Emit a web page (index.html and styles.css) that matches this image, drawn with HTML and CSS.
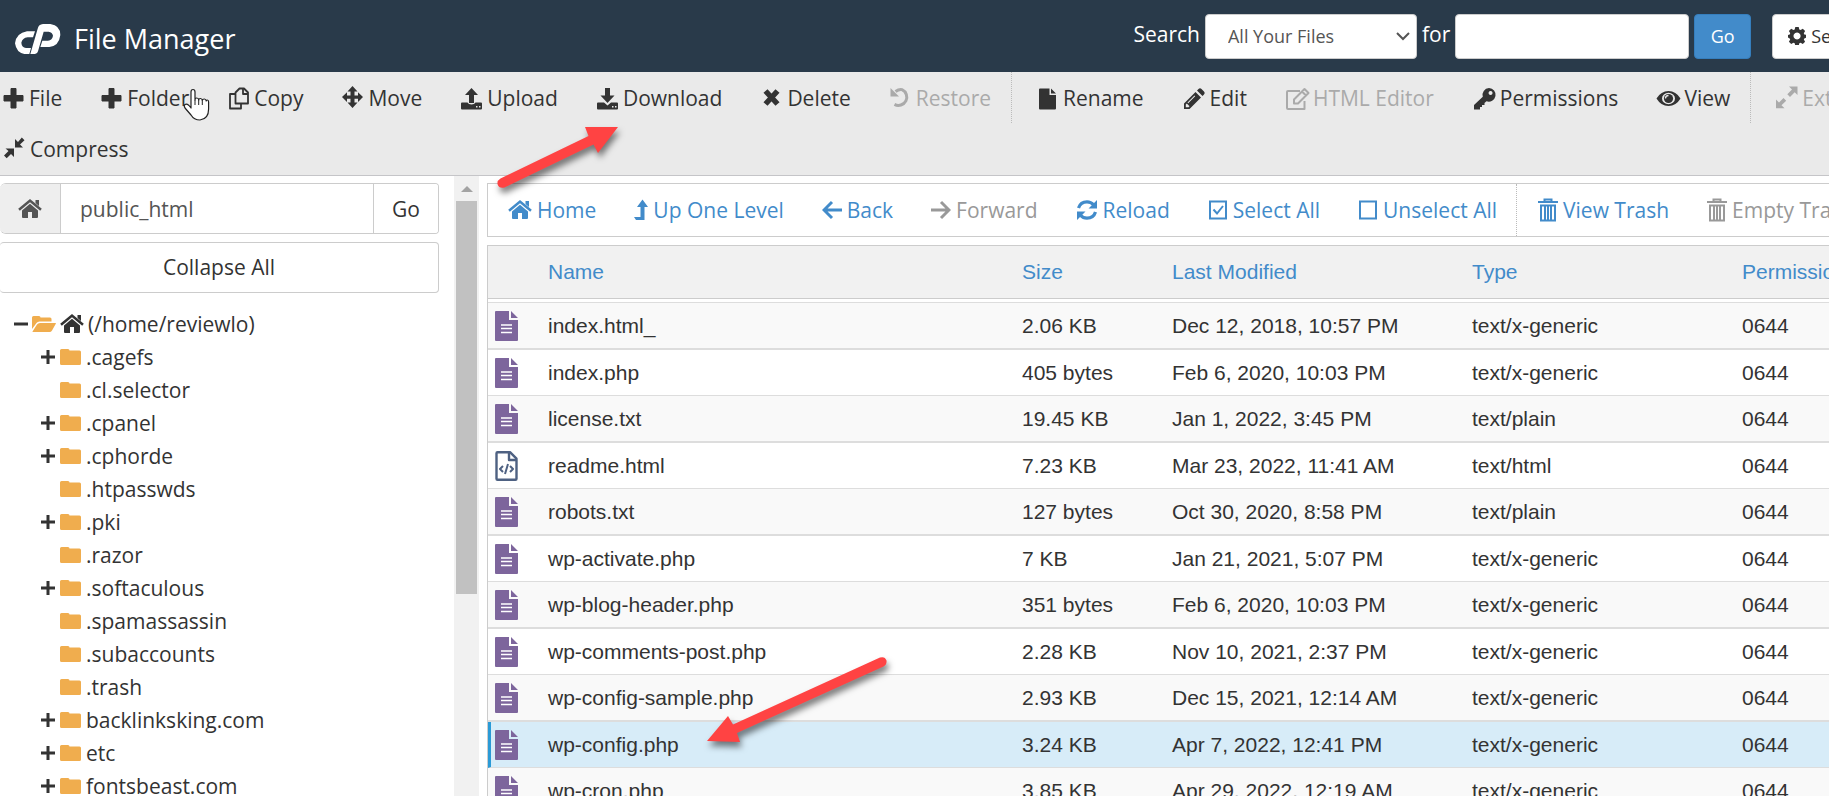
FILE: index.html
```html
<!DOCTYPE html>
<html lang="en">
<head>
    <meta charset="UTF-8">
    <meta name="viewport" content="width=device-width, initial-scale=1.0">
    <title>File Manager</title>
    <link rel="stylesheet" href="styles.css">
</head>
<body>
    <!-- icon sprite -->
    <svg class="sprite" aria-hidden="true">
        <symbol id="plus" viewBox="0 0 27 24"><path d="M11 2.500h5v7h7v5.500h-7v7h-5v-7h-7v-5.500h7z" stroke="currentColor" stroke-linejoin="round"/></symbol>
        <symbol id="copy" viewBox="0 0 27 24"><g fill="none" stroke="currentColor" stroke-width="1.800" stroke-linejoin="round"><path d="M10.500 6.500l4-4H19l4 4v11H10.500z"/><path d="M18 3v5h5"/><path d="M10.500 8H5v14.500h11V18"/></g></symbol>
        <symbol id="move" viewBox="0 0 27 24"><path d="M13.500 0l5 5.500h-3v4h3.500V6.200L24 11l-5 5v-3.300h-3.500v3.800h3L13.500 22l-5-5.500h3v-3.800H8V16l-5-5 5-4.800v3.300h3.500v-4h-3z"/></symbol>
        <symbol id="upload" viewBox="0 0 27 24"><path fill-rule="evenodd" d="M13.500 2l6.500 7h-4v8h-5V9H7zM4 16.500h5.500q1 2 4 2t4-2H23q1 0 1 1v5q0 1-1 1H4q-1 0-1-1v-5q0-1 1-1zM18 20v1.500h1.500V20zM21 20v1.500h1.500V20z"/></symbol>
        <symbol id="download" viewBox="0 0 27 24"><path fill-rule="evenodd" d="M11 2h5v7.500h4.500l-7 7.500-7-7.500H11zM4 16.500h6l3.500 3 3.500-3H23q1 0 1 1v5q0 1-1 1H4q-1 0-1-1v-5q0-1 1-1zM18 20v1.500h1.500V20zM21 20v1.500h1.500V20z"/></symbol>
        <symbol id="delete" viewBox="0 0 27 24"><path d="M7.500 5l12 13M19.500 5l-12 13" stroke="currentColor" stroke-width="5.500"/></symbol>
        <symbol id="restore" viewBox="0 0 27 24"><path d="M8.500 5.500Q12 3 15 3.600a8.300 8.300 0 1 1-7.500 14.800" fill="none" stroke="currentColor" stroke-width="3"/><path d="M3.500 2v8.500H12z"/></symbol>
        <symbol id="rename" viewBox="0 0 27 24"><path d="M6 2.500h9.500V9H22v13.500q0 1-1 1H6q-1 0-1-1v-19q0-1 1-1zM17 2.500l5 5h-5z"/></symbol>
        <symbol id="edit" viewBox="0 0 27 24"><path fill-rule="evenodd" d="M3 17.500L14.500 6l5.500 5.500L8.500 23H3zM4.800 18.500v2.700h2.700l1-1-2.700-2.700zM13.500 9.500l-7 7 .700.700 7-7zM16 4.500l1.500-1.500q1.500-1.500 3 0L23 5.500q1.500 1.500 0 3L21.500 10z"/></symbol>
        <symbol id="html-edit" viewBox="0 0 27 24"><g fill="none" stroke="currentColor" stroke-width="2" stroke-linejoin="round"><path d="M16 5H4q-1 0-1 1v16q0 1 1 1h16.500V15"/><path d="M10 13.500L20.500 3l4 4L14 17.500h-4zM18 5.500l4 4"/></g></symbol>
        <symbol id="key" viewBox="0 0 27 24"><path fill-rule="evenodd" d="M18 2a6.800 6.800 0 1 1-2.500 13.200L13.500 17v2h-2.500v2H9v2.500H3v-4.500l8.800-8.200A6.800 6.800 0 0 1 18 2zM19.500 5a2 2 0 1 0 .100 0z"/></symbol>
        <symbol id="eye" viewBox="0 0 27 24"><path fill-rule="evenodd" d="M1.500 12.500Q6 5 13.500 5t12 7.500Q21 20 13.500 20t-12-7.500zM7 12.500a6.500 5.800 0 1 0 13 0 6.500 5.800 0 1 0-13 0z"/><circle cx="13.500" cy="12.500" r="4.600"/><path d="M10.500 12.500a3 3 0 0 1 3-3" fill="none" stroke="#eaeaea" stroke-width="1.300"/></symbol>
        <symbol id="expand" viewBox="0 0 27 24"><path d="M16 0.500h8.500V9L21.700 6.300 17 11l-2.700-2.700L19 3.500zM3 13.500l3 3L10.500 12l2.700 2.700-4.700 4.500 3 3H3z"/></symbol>
        <symbol id="compress" viewBox="0 0 27 24"><path d="M14 2v8.500h8l-3-3L23.500 3.200 20.800.500 17 5zM4.500 11.500H13V20l-3-3-4.300 4.300L3 18.500 7.500 14z"/></symbol>
        <symbol id="home" viewBox="0 0 24 24"><path d="M12 2l11.800 9.800-1.600 1.900L12 5.200 1.800 13.700.200 11.800zM17.500 3H21v6l-3.500-3zM12 6.800l8 6.700V20q0 1-1 1h-5v-6h-4v6H5q-1 0-1-1v-6.500z"/></symbol>
        <symbol id="level-up" viewBox="0 0 14 24"><path d="M8.500 1.500L14 9h-3.500v13H2l-2-3h6.500V9H3z"/></symbol>
        <symbol id="back" viewBox="0 0 20 24"><path d="M10 4l-8 8 8 8M2 12h18" fill="none" stroke="currentColor" stroke-width="3"/></symbol>
        <symbol id="forward" viewBox="0 0 20 24"><path d="M10 4l8 8-8 8M18 12H0" fill="none" stroke="currentColor" stroke-width="3"/></symbol>
        <symbol id="reload" viewBox="0 0 22 24"><path d="M2.500 10Q4.500 3.800 11 3.800q4 0 6.500 3M19.500 14q-2 6.200-8.500 6.200-4 0-6.500-3" fill="none" stroke="currentColor" stroke-width="3.200"/><path d="M21 2v8.500h-8.500zM1 22v-8.500h8.500z"/></symbol>
        <symbol id="checked" viewBox="0 0 20 24"><path d="M2 3.500h16v17H2zM5.500 11.500l3.500 4 6-7.500" fill="none" stroke="currentColor" stroke-width="2"/></symbol>
        <symbol id="unchecked" viewBox="0 0 20 24"><path d="M2 3.500h16v17H2z" fill="none" stroke="currentColor" stroke-width="2"/></symbol>
        <symbol id="trash" viewBox="0 0 20 24"><path d="M0 4h20M6.500 4V1.500h7V4M3 7.500v15h14v-15zM7 8v14M10 8v14M13 8v14" fill="none" stroke="currentColor" stroke-width="2"/></symbol>
        <symbol id="gear" viewBox="0 0 18 18"><path fill-rule="evenodd" d="M7.300 0h3.400l.600 2.500 1.300.600 2.200-1.400 2.300 2.400-1.300 2.200.500 1.200 2.400.500v2.600l-2.400.800-.500 1.200 1.300 2.200-2.300 2.300-2.200-1.300-1.300.500-.600 2.700H7.300l-.600-2.700-1.300-.500-2.200 1.300-2.300-2.300 1.300-2.200-.500-1.200L0 10.600V8l1.700-.500.500-1.200L.900 4.100l2.300-2.400 2.200 1.400 1.300-.600zM9 5.500a3.500 3.500 0 1 0 .100 0z"/></symbol>
        <symbol id="folder" viewBox="0 0 21 18"><path d="M1.500 1H8q1.500 0 1.500 1.500H19.500Q21 2.500 21 4v11.500Q21 17 19.500 17h-18Q0 17 0 15.500v-13Q0 1 1.500 1z"/></symbol>
        <symbol id="folder-open" viewBox="0 0 24 18"><path d="M1.500 1H7q1.500 0 1.500 1.500H18q1.500 0 1.500 1.500v2.500H7.500q-2 0-3 1.500L0 14V2.500Q0 1 1.500 1zM8 8h15.500q.700 0 .300.700L20 15.500q-.800 1.500-2.500 1.500H1q-.800 0-.300-.800L5 9.500Q6 8 8 8z"/></symbol>
        <symbol id="tree-plus" viewBox="0 0 14 14"><path d="M7 0v14M0 7h14" stroke="currentColor" stroke-width="3"/></symbol>
        <symbol id="tree-minus" viewBox="0 0 14 14"><path d="M0 7h14" stroke="currentColor" stroke-width="3"/></symbol>
        <symbol id="file-text" viewBox="0 0 23 30"><path fill="#7d659c" d="M1 0h13v9h9v20q0 1-1 1H1q-1 0-1-1V1q0-1 1-1zM16 0l7 7h-7z"/><path d="M6 14h11M6 17.500h11M6 21.500h11" stroke="#fff" stroke-width="1.500"/></symbol>
        <symbol id="file-code" viewBox="0 0 23 30"><g fill="none" stroke="#4e6182" stroke-width="2.400" stroke-linejoin="round"><path fill="#fff" d="M2.500 1.200h12.500l6.500 6.500v20.100q0 1-1 1H2.500q-1 0-1-1V2.200q0-1 1-1z"/><path d="M14 1.500V9h7.500"/><path stroke-width="2" d="M8 15l-3 3 3 3M15 15l3 3-3 3M13 13l-3 10"/></g></symbol>
    </svg>

    <div class="page">
        <header class="header">
            <svg class="logo" width="46" height="30" viewBox="0 0 138 90"><path fill="#fff" d="M60 22L54 40H38Q22 42 19 56 20 70 33 72H48L43 90H28Q4 86 0 58 4 27 36 22zM46 90L68 14Q71 1 84 0H106Q136 4 136 33 132 66 103 69H76L82 50H99Q112 48 114 35 112 24 101 23H86L69 82Q67 90 60 90z"/></svg>
            <h1>File Manager</h1>
            <form class="search">
                <label for="search-scope">Search</label>
                <span class="select-wrap">
                    <select id="search-scope">
                        <option>All Your Files</option>
                    </select>
                    <svg width="14" height="9" viewBox="0 0 14 9"><path d="M1 1l6 6 6-6" fill="none" stroke="#555" stroke-width="2"/></svg>
                </span>
                <label for="search-text">for</label>
                <input type="text" id="search-text">
                <button type="button" class="btn-primary">Go</button>
                <button type="button" class="btn-settings"><svg width="18" height="18"><use href="#gear"/></svg>Settings</button>
            </form>
        </header>

        <ul class="toolbar">
            <li><button type="button"><svg width="27" height="24"><use href="#plus"/></svg>File</button></li>
            <li><button type="button"><svg width="27" height="24"><use href="#plus"/></svg>Folder</button></li>
            <li><button type="button"><svg width="27" height="24"><use href="#copy"/></svg>Copy</button></li>
            <li><button type="button"><svg width="27" height="24"><use href="#move"/></svg>Move</button></li>
            <li><button type="button"><svg width="27" height="24"><use href="#upload"/></svg>Upload</button></li>
            <li><button type="button"><svg width="27" height="24"><use href="#download"/></svg>Download</button></li>
            <li><button type="button"><svg width="27" height="24"><use href="#delete"/></svg>Delete</button></li>
            <li class="group-end"><button type="button" disabled><svg width="27" height="24"><use href="#restore"/></svg>Restore</button></li>
            <li><button type="button"><svg width="27" height="24"><use href="#rename"/></svg>Rename</button></li>
            <li><button type="button"><svg width="27" height="24"><use href="#edit"/></svg>Edit</button></li>
            <li><button type="button" disabled><svg width="27" height="24"><use href="#html-edit"/></svg>HTML Editor</button></li>
            <li><button type="button"><svg width="27" height="24"><use href="#key"/></svg>Permissions</button></li>
            <li class="group-end"><button type="button"><svg width="27" height="24"><use href="#eye"/></svg>View</button></li>
            <li><button type="button" disabled><svg width="27" height="24"><use href="#expand"/></svg>Extract</button></li>
            <li><button type="button"><svg width="27" height="24"><use href="#compress"/></svg>Compress</button></li>
        </ul>

        <div class="content">
            <aside class="sidebar">
                <div class="sidebar-body">
                    <form class="path">
                        <label for="path-input" aria-label="Path"><svg width="24" height="24"><use href="#home"/></svg></label>
                        <input type="text" id="path-input" value="public_html">
                        <button type="button">Go</button>
                    </form>
                    <button type="button" class="collapse">Collapse All</button>
                    <ul class="tree">
                        <li>
                            <div class="node root">
                                <button type="button" aria-label="Collapse"><svg width="14" height="14"><use href="#tree-minus"/></svg></button>
                                <svg class="folder" width="24" height="18"><use href="#folder-open"/></svg>
                                <svg width="24" height="24"><use href="#home"/></svg>
                                <span>(/home/reviewlo)</span>
                            </div>
                            <ul>
                                <li class="node"><button type="button" aria-label="Expand"><svg width="14" height="14"><use href="#tree-plus"/></svg></button><svg class="folder" width="21" height="18"><use href="#folder"/></svg><span>.cagefs</span></li>
                                <li class="node leaf"><svg class="folder" width="21" height="18"><use href="#folder"/></svg><span>.cl.selector</span></li>
                                <li class="node"><button type="button" aria-label="Expand"><svg width="14" height="14"><use href="#tree-plus"/></svg></button><svg class="folder" width="21" height="18"><use href="#folder"/></svg><span>.cpanel</span></li>
                                <li class="node"><button type="button" aria-label="Expand"><svg width="14" height="14"><use href="#tree-plus"/></svg></button><svg class="folder" width="21" height="18"><use href="#folder"/></svg><span>.cphorde</span></li>
                                <li class="node leaf"><svg class="folder" width="21" height="18"><use href="#folder"/></svg><span>.htpasswds</span></li>
                                <li class="node"><button type="button" aria-label="Expand"><svg width="14" height="14"><use href="#tree-plus"/></svg></button><svg class="folder" width="21" height="18"><use href="#folder"/></svg><span>.pki</span></li>
                                <li class="node leaf"><svg class="folder" width="21" height="18"><use href="#folder"/></svg><span>.razor</span></li>
                                <li class="node"><button type="button" aria-label="Expand"><svg width="14" height="14"><use href="#tree-plus"/></svg></button><svg class="folder" width="21" height="18"><use href="#folder"/></svg><span>.softaculous</span></li>
                                <li class="node leaf"><svg class="folder" width="21" height="18"><use href="#folder"/></svg><span>.spamassassin</span></li>
                                <li class="node leaf"><svg class="folder" width="21" height="18"><use href="#folder"/></svg><span>.subaccounts</span></li>
                                <li class="node leaf"><svg class="folder" width="21" height="18"><use href="#folder"/></svg><span>.trash</span></li>
                                <li class="node"><button type="button" aria-label="Expand"><svg width="14" height="14"><use href="#tree-plus"/></svg></button><svg class="folder" width="21" height="18"><use href="#folder"/></svg><span>backlinksking.com</span></li>
                                <li class="node"><button type="button" aria-label="Expand"><svg width="14" height="14"><use href="#tree-plus"/></svg></button><svg class="folder" width="21" height="18"><use href="#folder"/></svg><span>etc</span></li>
                                <li class="node"><button type="button" aria-label="Expand"><svg width="14" height="14"><use href="#tree-plus"/></svg></button><svg class="folder" width="21" height="18"><use href="#folder"/></svg><span>fontsbeast.com</span></li>
                            </ul>
                        </li>
                    </ul>
                </div>
                <div class="scrollbar">
                    <svg width="12" height="6" viewBox="0 0 12 6"><path d="M6 0l6 6H0z" fill="#a3a3a3"/></svg>
                    <div class="track"><div class="thumb"></div></div>
                </div>
            </aside>

            <main class="files">
                <ul class="actions">
                    <li><a href="#"><svg width="24" height="24"><use href="#home"/></svg>Home</a></li>
                    <li><a href="#"><svg width="14" height="24"><use href="#level-up"/></svg>Up One Level</a></li>
                    <li><a href="#"><svg width="20" height="24"><use href="#back"/></svg>Back</a></li>
                    <li><a href="#" class="disabled"><svg width="20" height="24"><use href="#forward"/></svg>Forward</a></li>
                    <li><a href="#"><svg width="22" height="24"><use href="#reload"/></svg>Reload</a></li>
                    <li><a href="#"><svg width="20" height="24"><use href="#checked"/></svg>Select All</a></li>
                    <li class="group-end"><a href="#"><svg width="20" height="24"><use href="#unchecked"/></svg>Unselect All</a></li>
                    <li><a href="#"><svg width="20" height="24"><use href="#trash"/></svg>View Trash</a></li>
                    <li><a href="#" class="disabled"><svg width="20" height="24"><use href="#trash"/></svg>Empty Trash</a></li>
                </ul>

                <table class="file-table">
                    <thead>
                        <tr>
                            <th class="col-icon"></th>
                            <th><a href="#">Name</a></th>
                            <th class="col-size"><a href="#">Size</a></th>
                            <th class="col-modified"><a href="#">Last Modified</a></th>
                            <th class="col-type"><a href="#">Type</a></th>
                            <th class="col-perms"><a href="#">Permissions</a></th>
                        </tr>
                    </thead>
                    <tbody>
                        <tr><td><svg width="23" height="30"><use href="#file-text"/></svg></td><td>index.html_</td><td>2.06 KB</td><td>Dec 12, 2018, 10:57 PM</td><td>text/x-generic</td><td>0644</td></tr>
                        <tr><td><svg width="23" height="30"><use href="#file-text"/></svg></td><td>index.php</td><td>405 bytes</td><td>Feb 6, 2020, 10:03 PM</td><td>text/x-generic</td><td>0644</td></tr>
                        <tr><td><svg width="23" height="30"><use href="#file-text"/></svg></td><td>license.txt</td><td>19.45 KB</td><td>Jan 1, 2022, 3:45 PM</td><td>text/plain</td><td>0644</td></tr>
                        <tr><td><svg width="23" height="30"><use href="#file-code"/></svg></td><td>readme.html</td><td>7.23 KB</td><td>Mar 23, 2022, 11:41 AM</td><td>text/html</td><td>0644</td></tr>
                        <tr><td><svg width="23" height="30"><use href="#file-text"/></svg></td><td>robots.txt</td><td>127 bytes</td><td>Oct 30, 2020, 8:58 PM</td><td>text/plain</td><td>0644</td></tr>
                        <tr><td><svg width="23" height="30"><use href="#file-text"/></svg></td><td>wp-activate.php</td><td>7 KB</td><td>Jan 21, 2021, 5:07 PM</td><td>text/x-generic</td><td>0644</td></tr>
                        <tr><td><svg width="23" height="30"><use href="#file-text"/></svg></td><td>wp-blog-header.php</td><td>351 bytes</td><td>Feb 6, 2020, 10:03 PM</td><td>text/x-generic</td><td>0644</td></tr>
                        <tr><td><svg width="23" height="30"><use href="#file-text"/></svg></td><td>wp-comments-post.php</td><td>2.28 KB</td><td>Nov 10, 2021, 2:37 PM</td><td>text/x-generic</td><td>0644</td></tr>
                        <tr><td><svg width="23" height="30"><use href="#file-text"/></svg></td><td>wp-config-sample.php</td><td>2.93 KB</td><td>Dec 15, 2021, 12:14 AM</td><td>text/x-generic</td><td>0644</td></tr>
                        <tr class="selected"><td><svg width="23" height="30"><use href="#file-text"/></svg></td><td>wp-config.php</td><td>3.24 KB</td><td>Apr 7, 2022, 12:41 PM</td><td>text/x-generic</td><td>0644</td></tr>
                        <tr><td><svg width="23" height="30"><use href="#file-text"/></svg></td><td>wp-cron.php</td><td>3.85 KB</td><td>Apr 29, 2022, 12:19 AM</td><td>text/x-generic</td><td>0644</td></tr>
                    </tbody>
                </table>
            </main>
        </div>

        <!-- pointer arrows and hand cursor, over the page -->
        <svg class="arrow" id="arrow-download" width="140" height="80" viewBox="0 0 140 80"><path fill="#ff4343" d="M128 7L108 33 103.500 24.500 14.500 67.500Q9 69 7.500 64 7 60.500 10.500 58.500L98.500 16 95 7z"/></svg>
        <svg class="arrow" id="arrow-config" width="200" height="100" viewBox="0 0 200 100"><path fill="#ff4343" d="M7 91L28 66 33 74.500 180 7.500Q185 6 186.500 10.500 187 14.500 183.500 16.500L37 83 40 92z"/></svg>
        <svg class="cursor" width="28" height="34" viewBox="0 0 28 34"><path fill="#fff" stroke="#222" stroke-width="1.200" stroke-linejoin="round" d="M9 20V4q0-2.500 2-2.500T13 4v8q0-2 1.800-2t1.900 2q0-1.500 1.700-1.500t1.900 2q.200-1.500 2-1.500t1.900 2q0-1 1.200-1t1.200 2v7q0 10-8.600 11-6 0-9-5L3 20q-1.500-2.500 0-3.500t4 1z"/><path d="M13 12v5M16.700 12v5M20.300 12.500V17" stroke="#222"/></svg>
    </div>
</body>
</html>
```

FILE: styles.css
```css
* {
    box-sizing: border-box;
}
body {
    margin: 0;
    height: 100vh;
    overflow: hidden;
    font-family: "Open Sans", "Noto Sans", sans-serif;
    font-size: 21px;
    line-height: 30px;
    color: #333;
    background: #fff;
}
ul {
    list-style: none;
    margin: 0;
    padding: 0;
}
button, input, select {
    font: inherit;
    color: inherit;
}
a {
    color: #428bca;
    text-decoration: none;
}
svg {
    fill: currentColor;
    flex: none;
}
.sprite {
    display: none;
}
/* the file manager is a little wider than the window */
.page {
    position: relative;
    width: calc(100% + 87px);
    height: 100%;
    display: flex;
    flex-direction: column;
}

/* header */
.header {
    flex: none;
    display: flex;
    align-items: center;
    height: 72px;
    padding: 0 22px 0 15px;
    background: #293a4a;
    color: #fff;
}
.logo {
    margin-top: 6px;
}
.header h1 {
    margin: 6px 0 0 13px;
    font-size: 27px;
    font-weight: 400;
}
.search {
    display: flex;
    align-items: center;
    gap: 5px;
    margin-left: auto;
}
.search label {
    padding-bottom: 4px;
}
.search select, .search input, .search button {
    height: 45px;
    border: 1px solid #ccc;
    border-radius: 4px;
    background: #fff;
    color: #555;
    font-size: 18px;
}
.select-wrap {
    display: flex;
    align-items: center;
}
.search select {
    width: 212px;
    padding: 0 22px;
    appearance: none;
}
.select-wrap svg {
    margin-left: -21px;
    margin-right: 7px;
}
.search input {
    width: 234px;
}
.search .btn-primary {
    width: 57px;
    padding: 0;
    background: #428bca;
    border-color: #357ebd;
    color: #fff;
}
.search .btn-settings {
    display: flex;
    align-items: center;
    gap: 5px;
    margin-left: 16px;
    padding: 0 15px;
    color: #333;
}

/* toolbar */
.toolbar {
    flex: none;
    display: flex;
    flex-wrap: wrap;
    padding-bottom: 1px;
    margin-left: -18px;
    background: #eaeaea;
    border-bottom: 1px solid #c5c5c8;
}
.toolbar button, .actions a {
    display: flex;
    align-items: center;
    height: 51px;
    padding: 0 18px;
    border: 0;
    background: none;
    white-space: nowrap;
}
.toolbar button {
    gap: 2px;
}
.toolbar .group-end ~ li button {
    padding-left: 19px;
}
.toolbar button:disabled {
    color: #aaa;
}
.group-end {
    padding-right: 2px;
    margin-right: 3px;
    border-right: 1px dotted #bbb;
}

/* sidebar */
.content {
    flex: 1;
    min-height: 0;
    display: flex;
}
.sidebar {
    flex: 0 0 25%;
    display: flex;
    overflow: hidden;
}
.sidebar-body {
    flex: 1;
    padding: 7px 15px 0 0;
}
.path {
    display: flex;
    height: 51px;
    border: 1px solid #ccc;
    border-left: 0;
    border-radius: 6px 4px 4px 6px;
    overflow: hidden;
}
.path label {
    display: flex;
    align-items: center;
    justify-content: center;
    width: 60px;
    background: #eee;
    color: #555;
}
.path input {
    flex: 1;
    min-width: 0;
    padding: 0 19px;
    border: solid #ccc;
    border-width: 0 1px;
    color: #555;
}
.path button {
    width: 64px;
    padding: 0;
    border: 0;
    background: #fff;
}
.collapse {
    width: 100%;
    height: 51px;
    margin: 8px 0 14px;
    padding: 0 0 2px;
    border: 1px solid #ccc;
    border-left: 0;
    border-radius: 4px;
    background: #fff;
}
.node {
    display: flex;
    align-items: center;
    gap: 5px;
    height: 33px;
    padding-left: 41px;
}
.node.root {
    padding-left: 14px;
    gap: 4px;
}
.node.leaf {
    padding-left: 60px;
}
.node button {
    display: flex;
    padding: 0;
    border: 0;
    background: none;
}
.node .folder {
    color: #f0ad4e;
}
.scrollbar {
    flex: 0 0 25px;
    display: flex;
    flex-direction: column;
    align-items: center;
    padding-top: 10px;
    background: #f1f1f1;
}
.track {
    flex: 1;
    width: 21px;
    margin-top: 9px;
}
.thumb {
    height: 66%;
    background: #c1c1c1;
}

/* file list */
.files {
    flex: 1;
    min-width: 0;
    padding: 7px 15px 0 8px;
    overflow: hidden;
}
.actions {
    display: flex;
    margin-bottom: 8px;
    border: 1px solid #ccc;
    overflow: hidden;
}
.actions a {
    height: 52px;
    padding: 0 18px 0 20px;
    gap: 5px;
}
.actions .disabled {
    color: #999;
}
.actions .group-end {
    padding-right: 1px;
    margin-right: 1px;
}
.file-table {
    width: 100%;
    table-layout: fixed;
    border-collapse: separate;
    border-spacing: 0;
    border-left: 1px solid #ccc;
    font-family: "Liberation Sans", Arial, sans-serif;
}
.file-table th {
    height: 54px;
    padding: 0 13px;
    border: solid #ccc;
    border-width: 1px 0;
    background: #f1f1f1;
    font-weight: 400;
    text-align: left;
}
.file-table thead::after {
    content: "";
    display: block;
    height: 3px;
}
.file-table td {
    height: 46px;
    padding: 0 13px;
    border-bottom: 1px solid #ddd;
    white-space: nowrap;
}
.file-table tbody tr:nth-child(odd) td {
    height: 47px;
    border-bottom-width: 2px;
    background: #f9f9f9;
}
.file-table tbody tr:first-child td {
    height: 48px;
    border-top: 1px solid #ddd;
}
.file-table td:first-child {
    padding: 0 0 0 7px;
}
.file-table td svg {
    display: block;
}
.file-table .selected td {
    background: #d7ecf8;
}
.file-table .selected td:first-child {
    padding-left: 4px;
    border-left: 3px solid #2a9ad6;
}
.col-icon {
    width: 47px;
}
.col-size {
    width: 150px;
}
.col-modified {
    width: 300px;
}
.col-type {
    width: 270px;
}
.col-perms {
    width: 172px;
}

/* overlays */
.arrow, .cursor {
    position: absolute;
    overflow: visible;
}
.arrow {
    filter: drop-shadow(2px 5px 3px rgba(0,0,0,0.5));
}
#arrow-download {
    left: 490px;
    top: 120px;
}
#arrow-config {
    left: 700px;
    top: 650px;
}
.cursor {
    left: 182px;
    top: 88px;
}
```
